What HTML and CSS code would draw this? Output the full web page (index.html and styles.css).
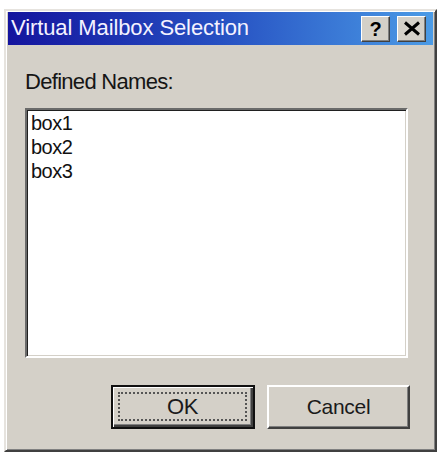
FILE: index.html
```html
<!DOCTYPE html>
<html>
<head>
<meta charset="utf-8">
<link rel="stylesheet" href="styles.css">
</head>
<body>
<div class="window">
  <div class="titlebar">
    <span class="title">Virtual Mailbox Selection</span>
    <div class="tbuttons">
      <div class="tbtn help">?</div>
      <div class="tbtn close">
        <svg width="18" height="15" viewBox="0 0 18 15"><path d="M2 1.5 L16 13.5 M16 1.5 L2 13.5" stroke="#000" stroke-width="3" fill="none"/></svg>
      </div>
    </div>
  </div>
  <div class="content">
    <div class="label">Defined Names:</div>
    <div class="listbox">
      <div class="item">box1</div>
      <div class="item">box2</div>
      <div class="item">box3</div>
    </div>
    <div class="buttons">
      <div class="btn default"><span class="focus">OK</span></div>
      <div class="btn">Cancel</div>
    </div>
  </div>
</div>
</body>
</html>
```
FILE: styles.css
```css
html, body {
  margin: 0;
  padding: 0;
  background: #ffffff;
}
body {
  font-family: "Liberation Sans", Arial, sans-serif;
  width: 440px;
  height: 454px;
  overflow: hidden;
}
.window {
  box-sizing: border-box;
  margin: 9px 0 0 4px;
  width: 433px;
  height: 443px;
  background: #d4d0c8;
  border: 2px solid;
  border-color: #e6e3de #404040 #404040 #e6e3de;
  box-shadow: inset 1px 1px #ffffff, inset -1px -1px #808080;
  padding: 1px 2px 2px 2px;
  display: flex;
  flex-direction: column;
}
.titlebar {
  height: 33px;
  flex: none;
  background: linear-gradient(90deg, #14149e 0%, #2650c2 50%, #4b9be6 100%);
  display: flex;
  align-items: center;
  justify-content: space-between;
}
.title {
  color: #f4f2ff;
  font-size: 22px;
  line-height: 33px;
  padding: 0 0 2px 3px;
  letter-spacing: -0.1px;
}
.tbuttons {
  display: flex;
  gap: 7px;
  margin-right: 7px;
  align-items: center;
}
.tbtn {
  box-sizing: border-box;
  width: 29px;
  height: 26px;
  background: #d4d0c8;
  border: 1px solid;
  border-color: #ffffff #404040 #404040 #ffffff;
  box-shadow: inset -1px -1px #808080;
  display: flex;
  align-items: center;
  justify-content: center;
}
.help {
  font-weight: bold;
  font-size: 20px;
  line-height: 20px;
  color: #000;
}
.content {
  flex: 1;
  display: flex;
  flex-direction: column;
  padding: 24px 23px 0 17px;
}
.label {
  font-size: 22px;
  line-height: 26px;
  letter-spacing: -0.7px;
  color: #151515;
}
.listbox {
  box-sizing: border-box;
  margin-top: 13px;
  width: 383px;
  height: 250px;
  background: #ffffff;
  border: 2px solid;
  border-color: #6a6a6a #ffffff #ffffff #6a6a6a;
  box-shadow: inset 1px 1px #202020, inset -1px -1px #d4d0c8;
  padding: 1px 4px 0 4px;
}
.item {
  font-size: 20px;
  line-height: 24px;
  letter-spacing: -0.5px;
  color: #111;
}
.buttons {
  display: flex;
  gap: 12px;
  justify-content: flex-end;
  margin-top: 27px;
}
.btn {
  box-sizing: border-box;
  width: 143px;
  height: 44px;
  background: #d4d0c8;
  border: 2px solid;
  border-color: #ffffff #404040 #404040 #ffffff;
  box-shadow: inset -1px -1px #808080;
  display: flex;
  align-items: center;
  justify-content: center;
  font-size: 21px;
  letter-spacing: -0.3px;
  color: #1a1a1a;
}
.btn.default {
  width: 144px;
  border: 2px solid #101010;
  box-shadow: inset 1px 1px #ffffff, inset -2px -2px #404040, inset -3px -3px #808080;
  padding: 5px 6px 6px 5px;
}
.focus {
  box-sizing: border-box;
  width: 100%;
  height: 100%;
  border: 2px dotted #555;
  display: flex;
  align-items: center;
  justify-content: center;
  font-size: 22px;
}
```
